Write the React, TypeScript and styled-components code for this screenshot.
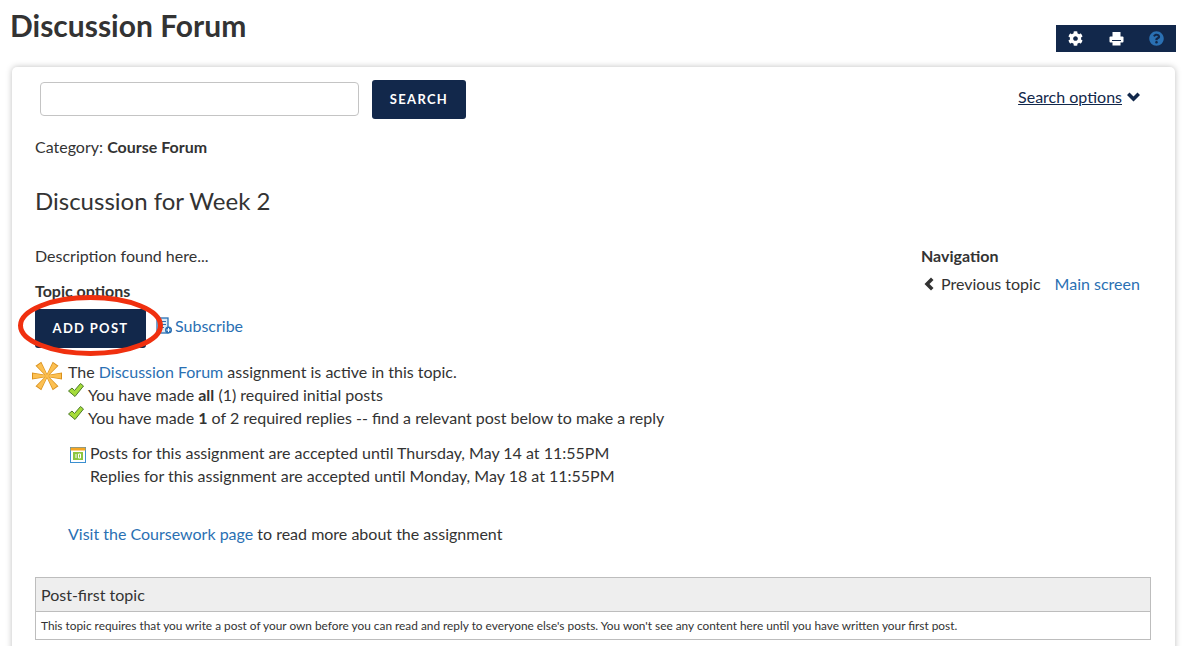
import styled, { createGlobalStyle } from 'styled-components'
import { FaCog, FaQuestionCircle } from 'react-icons/fa'

const GlobalStyle = createGlobalStyle`
  html, body {
    margin: 0;
    height: 646px;
    overflow: hidden;
    background: #fff;
    color: #333;
    font-family: Lato, "Open Sans", sans-serif;
    font-size: 16px;
    line-height: 23px;
  }
`

const Page = styled.div`
  position: relative;
  height: 646px;
  overflow: hidden;
  padding: 0 6px 0 12px;
`

const Header = styled.header`
  display: flex;
  justify-content: space-between;
  height: 67px;
`

const Title = styled.h1`
  margin: 7px 0 0 -2px;
  font-size: 30px;
  line-height: 36px;
  font-weight: 700;
  color: #333;
`

const Toolbar = styled.div`
  display: flex;
  align-items: center;
  justify-content: space-between;
  box-sizing: border-box;
  width: 120px;
  height: 27px;
  margin-top: 25px;
  padding: 0 12px;
  background: #12284b;
  color: #fff;
  font-size: 15px;
`

const Card = styled.main`
  box-sizing: border-box;
  width: 1163px;
  height: 620px;
  padding: 13px 24px 0 23px;
  border-radius: 5px;
  background: #fff;
  box-shadow: 0 0 6px rgba(0, 0, 0, 0.25);
`

const SearchRow = styled.div`
  display: flex;
  align-items: flex-start;
  height: 39px;
  padding-left: 5px;
`

const SearchInput = styled.input`
  box-sizing: border-box;
  width: 319px;
  height: 34px;
  margin: 2px 13px 0 0;
  border: 1px solid #c4c4c4;
  border-radius: 4px;
  background: #fff;
`

const DarkButton = styled.button<{ $w: number; $h: number }>`
  width: ${p => p.$w}px;
  height: ${p => p.$h}px;
  padding: 0 0 2px;
  border: 0;
  border-radius: 3px;
  background: #12284b;
  color: #fff;
  font: 700 13px Lato, sans-serif;
  letter-spacing: 1.3px;
`

const SearchOptions = styled.a`
  display: flex;
  align-items: center;
  gap: 4px;
  margin: 5px 10px 0 auto;
  color: #12284b;
  span { text-decoration: underline; }
`

const Category = styled.p`
  margin: 16px 0 0;
`

const Heading = styled.h3`
  margin: 27px 0 0;
  font-size: 24px;
  line-height: 31px;
  font-weight: 400;
`

const Columns = styled.div`
  display: flex;
  justify-content: space-between;
  margin-top: 28px;
`

const Left = styled.div``

const Description = styled.p`
  margin: 0;
`

const Options = styled.div`
  margin-top: 12px;
  font-weight: 700;
`

const Actions = styled.div`
  position: relative;
  display: flex;
  align-items: center;
  height: 39px;
  margin-top: 7px;
`

const Ring = styled.svg`
  position: absolute;
  left: -19px;
  top: -16px;
`

const SubscribeLink = styled.a`
  display: flex;
  align-items: center;
  margin: -6px 0 0 9px;
  color: #2a70b3;
  svg { margin-right: 1px; }
`

const Link = styled.a`
  color: #2a70b3;
`

const Assignment = styled.div`
  display: flex;
  margin-top: 12px;
  margin-left: -3px;
`

const Star = styled.svg`
  flex: none;
  margin-top: 1px;
`

const Lines = styled.div`
  margin-left: 6px;
`

const CheckLine = styled.div`
  display: flex;
  svg { flex: none; margin: -1px 4px 0 0; }
`

const DateBlock = styled.div`
  display: flex;
  margin-top: 12px;
  svg { flex: none; margin: 6px 4px 0 2px; }
`

const Visit = styled.p`
  margin: 35px 0 0;
`

const Nav = styled.nav`
  width: 220px;
  margin-right: 10px;
`

const NavTitle = styled.div`
  font-weight: 700;
`

const NavLinks = styled.div`
  display: flex;
  align-items: center;
  margin-top: 5px;
  svg { margin: 0 7px 0 3px; }
`

const NavMain = styled(Link)`
  margin-left: 14px;
`

const Notice = styled.section`
  box-sizing: border-box;
  width: 1116px;
  margin-top: 32px;
  border: 1px solid #bdbdbd;
`

const NoticeHead = styled.div`
  height: 33px;
  padding-left: 5px;
  background: #eee;
  border-bottom: 1px solid #bdbdbd;
  line-height: 34px;
`

const NoticeBody = styled.div`
  height: 27px;
  padding-left: 5px;
  font-size: 11.85px;
  line-height: 28px;
`

function Check() {
  return (
    <svg width="16" height="16" viewBox="0 0 16 16">
      <path d="M0.5 9 L4 6 L6.5 8.5 L12.5 1.5 L15.5 4 L7 14.5 Z" fill="#a5dc3a" stroke="#4d7a2a" strokeWidth="1" strokeLinejoin="round" />
    </svg>
  )
}

function Chevron({ dir }: { dir: 'down' | 'left' }) {
  const d = dir === 'down' ? 'M1 4 L3.5 1.5 L7.5 5.5 L11.5 1.5 L14 4 L7.5 10.5 Z' : 'M7 0.5 L9.5 3 L5.5 7 L9.5 11 L7 13.5 L0.5 7 Z'
  return (
    <svg width={dir === 'down' ? 15 : 10} height={dir === 'down' ? 12 : 14} viewBox={dir === 'down' ? '0 0 15 12' : '0 0 10 14'}>
      <path d={d} fill="currentColor" />
    </svg>
  )
}

function PrintIcon() {
  return (
    <svg width="15" height="15" viewBox="0 0 15 15">
      <rect x="3.5" y="1" width="8" height="5" fill="#fff" />
      <rect x="0.5" y="5.5" width="14" height="6" rx="1" fill="#fff" />
      <rect x="3" y="9" width="9" height="1" fill="#12284b" />
      <rect x="3.5" y="10" width="8" height="4.5" fill="#fff" />
    </svg>
  )
}

const starAngles = [35, 90, 145, 215, 270, 325]

export default function App() {
  return (
    <Page>
      <GlobalStyle />
      <Header>
        <Title>Discussion Forum</Title>
        <Toolbar>
          <FaCog />
          <PrintIcon />
          <FaQuestionCircle color="#2a70b3" />
        </Toolbar>
      </Header>
      <Card>
        <SearchRow>
          <SearchInput />
          <DarkButton $w={94} $h={39}>SEARCH</DarkButton>
          <SearchOptions>
            <span>Search options</span>
            <Chevron dir="down" />
          </SearchOptions>
        </SearchRow>
        <Category>Category: <b>Course Forum</b></Category>
        <Heading>Discussion for Week 2</Heading>
        <Columns>
          <Left>
            <Description>Description found here...</Description>
            <Options>Topic options</Options>
            <Actions>
              <DarkButton $w={111} $h={39}>ADD POST</DarkButton>
              <SubscribeLink>
                <svg width="19" height="18" viewBox="0 0 19 18">
                  <rect x="2" y="1" width="11" height="15" fill="#dbe8f5" stroke="#2a70b3" strokeWidth="1.3" />
                  <path d="M4 4.5h7M4 7.5h7M4 10.5h5" stroke="#2a70b3" strokeWidth="1.2" />
                  <circle cx="13.5" cy="13" r="3.5" fill="#2a70b3" />
                  <path d="M11.5 13h4M13.5 11v4" stroke="#fff" strokeWidth="1" />
                </svg>
                Subscribe
              </SubscribeLink>
              <Ring width="150" height="66" viewBox="0 0 150 66">
                <ellipse cx="74.5" cy="32.5" rx="70" ry="28" fill="none" stroke="#f0300f" strokeWidth="5" />
              </Ring>
            </Actions>
            <Assignment>
              <Star width="30" height="30" viewBox="0 0 30 30">
                <g fill="#d9901c">
                  {starAngles.map(a => (
                    <polygon key={a} points="11.5,0 18.5,0 16,15 14,15" transform={`rotate(${a} 15 15)`} />
                  ))}
                </g>
                <g fill="#fcc052">
                  {starAngles.map(a => (
                    <polygon key={a} points="12.5,1 17.5,1 15.5,15 14.5,15" transform={`rotate(${a} 15 15)`} />
                  ))}
                </g>
              </Star>
              <Lines>
                <div>The <Link>Discussion Forum</Link> assignment is active in this topic.</div>
                <CheckLine><Check />You have made&nbsp;<b>all</b>&nbsp;(1) required initial posts</CheckLine>
                <CheckLine><Check />You have made&nbsp;<b>1</b>&nbsp;of 2 required replies -- find a relevant post below to make a reply</CheckLine>
                <DateBlock>
                  <svg width="16" height="16" viewBox="0 0 16 16">
                    <rect x="0.5" y="0.5" width="15" height="15" fill="#fff" stroke="#3a8fd0" />
                    <rect x="0.5" y="0.5" width="15" height="3" fill="#f5a623" />
                    <rect x="3" y="5" width="10" height="8" fill="#8cc63f" />
                    <path d="M6 7v4M8.5 7h2v4h-2z" stroke="#fff" strokeWidth="1" fill="none" />
                  </svg>
                  <div>
                    Posts for this assignment are accepted until Thursday, May 14 at 11:55PM
                    <br />
                    Replies for this assignment are accepted until Monday, May 18 at 11:55PM
                  </div>
                </DateBlock>
                <Visit><Link>Visit the Coursework page</Link> to read more about the assignment</Visit>
              </Lines>
            </Assignment>
          </Left>
          <Nav>
            <NavTitle>Navigation</NavTitle>
            <NavLinks>
              <Chevron dir="left" />
              Previous topic
              <NavMain>Main screen</NavMain>
            </NavLinks>
          </Nav>
        </Columns>
        <Notice>
          <NoticeHead>Post-first topic</NoticeHead>
          <NoticeBody>This topic requires that you write a post of your own before you can read and reply to everyone else's posts. You won't see any content here until you have written your first post.</NoticeBody>
        </Notice>
      </Card>
    </Page>
  )
}
